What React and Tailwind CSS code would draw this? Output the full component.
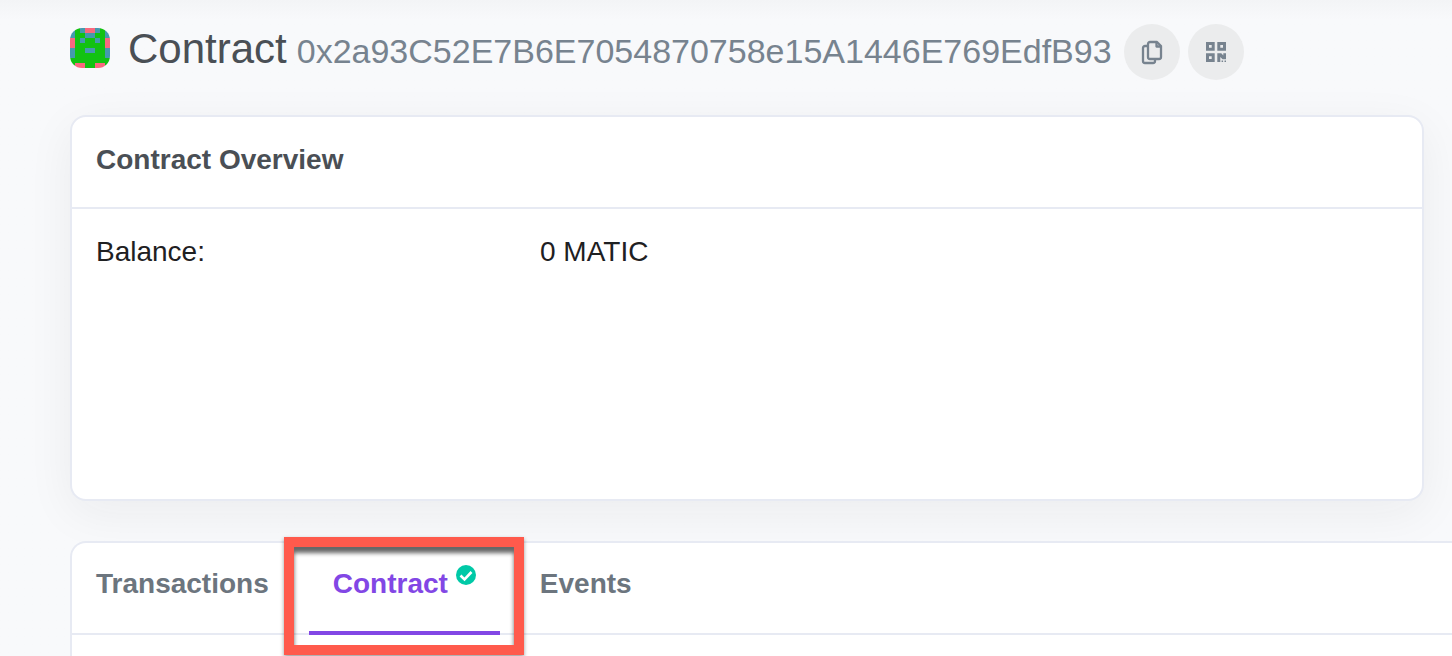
import React from "react";

const T = "#449aae";
const P = "#f9687f";
const G = "#12c212";
const identicon = ["TGTPPTGT", "TGGTTGGT", "PGTGGTGP", "PGGGGGGP", "TGGTTGGT", "TGGGGGGT", "GGGGGGGG", "GPPGGPPG"];
const colors = { T, P, G };

function Identicon() {
  return (
    <svg viewBox="0 0 8 8" className="mb-2 size-10 shrink-0 rounded-xl" shapeRendering="crispEdges" role="img" aria-label="Contract identicon">
      {identicon.flatMap((row, y) =>
        row.split("").map((c, x) => <rect key={`${x}-${y}`} x={x} y={y} width="1" height="1" fill={colors[c]} />)
      )}
    </svg>
  );
}

function CopyIcon() {
  return (
    <svg viewBox="0 0 22 24" className="h-6 w-[22px] overflow-visible" fill="none" stroke="currentColor" strokeWidth="2.3" strokeLinejoin="round">
      <path d="M7 6H4a2 2 0 0 0-2 2v13a2 2 0 0 0 2 2h8a2 2 0 0 0 2-2v-2" />
      <path d="M9 2h7l4 4v11a2 2 0 0 1-2 2H9a2 2 0 0 1-2-2V4a2 2 0 0 1 2-2Z" />
      <path d="M15.500 2v4.500H20" />
    </svg>
  );
}

function QrIcon() {
  return (
    <svg viewBox="0 0 20 20" className="size-5" fill="currentColor">
      <path fillRule="evenodd" d="M0 0h8.700v8.700H0ZM3 3v2.700h2.700V3ZM11.300 0H20v8.700h-8.700ZM14.300 3v2.700H17V3ZM0 11.300h8.700V20H0ZM3 14.300V17h2.700v-2.700Z" />
      <path d="M11.300 11.300h4l2 2.200v-2.200H20v6h-3.500l-2.200-2.300v5h-3ZM15.600 18.500h1.500V20h-1.500ZM18.500 18.500H20V20h-1.500Z" />
    </svg>
  );
}

export default function App() {
  return (
    <main className="flex min-h-screen flex-col overflow-x-clip bg-[#f8f9fb] bg-linear-to-b from-[#f3f4f6] from-0% to-[#f8f9fb] to-[20px] pl-[70px] font-['Liberation_Sans',Arial,sans-serif] text-[28px] leading-[42px] text-[#1e2022]">
      <header className="flex items-center pt-6">
        <Identicon />
        <h1 className="mb-1 ml-[18px] flex items-baseline gap-2.5 whitespace-nowrap text-[42px] leading-[48px] text-[#4a4f55]">
          Contract
          <span className="text-[34px] text-[#77838f]">0x2a93C52E7B6E7054870758e15A1446E769EdfB93</span>
        </h1>
        <div className="ml-3 flex gap-2 text-[#77838f]">
          <button aria-label="Copy address" className="flex size-14 items-center justify-center rounded-full bg-[#ebeced]"><CopyIcon /></button>
          <button aria-label="View QR code" className="flex size-14 items-center justify-center rounded-full bg-[#ebeced]"><QrIcon /></button>
        </div>
      </header>

      <section className="mt-[35px] mr-7 min-h-[386px] rounded-2xl border-2 border-[#e7eaf3] bg-white shadow-[0_12px_48px_rgba(30,32,34,0.06)]">
        <h2 className="border-b-2 border-[#e7eaf3] px-6 pt-[22px] pb-[26px] font-bold text-[#4a4f55]">Contract Overview</h2>
        <dl className="grid grid-cols-[444px_1fr] px-6 pt-[22px]">
          <dt>Balance:</dt>
          <dd>0 MATIC</dd>
        </dl>
      </section>

      <section className="relative mt-10 grow rounded-tl-2xl border-t-2 border-l-2 border-[#e7eaf3] bg-white">
        <nav className="flex border-b-2 border-[#e7eaf3] font-bold text-[#6c757e]">
          <a href="#transactions" className="px-6 pt-5 pb-7">Transactions</a>
          <a href="#contract" aria-current="page" className="relative z-10 -mb-0.5 ml-4 flex gap-2 border-b-4 border-[#8247e5] px-6 pt-5 pb-[26px] text-[#8247e5]">
            Contract
            <svg viewBox="0 0 20 20" className="mt-0.5 size-5" role="img" aria-label="Verified">
              <circle cx="10" cy="10" r="10" fill="#00c9a7" />
              <path d="M4.500 10.500l4 4 7-7.500" fill="none" stroke="white" strokeWidth="2.600" />
            </svg>
          </a>
          <a href="#events" className="ml-4 px-6 pt-5 pb-7">Events</a>
        </nav>
        <div aria-hidden="true" className="pointer-events-none absolute -top-1.5 left-[212px] z-20 h-[118px] w-[240px] border-10 border-[#ff5a4c] shadow-[0_2px_4px_rgba(0,0,0,0.4),inset_0_6px_4px_rgba(0,0,0,0.6)]" />
      </section>
    </main>
  );
}
